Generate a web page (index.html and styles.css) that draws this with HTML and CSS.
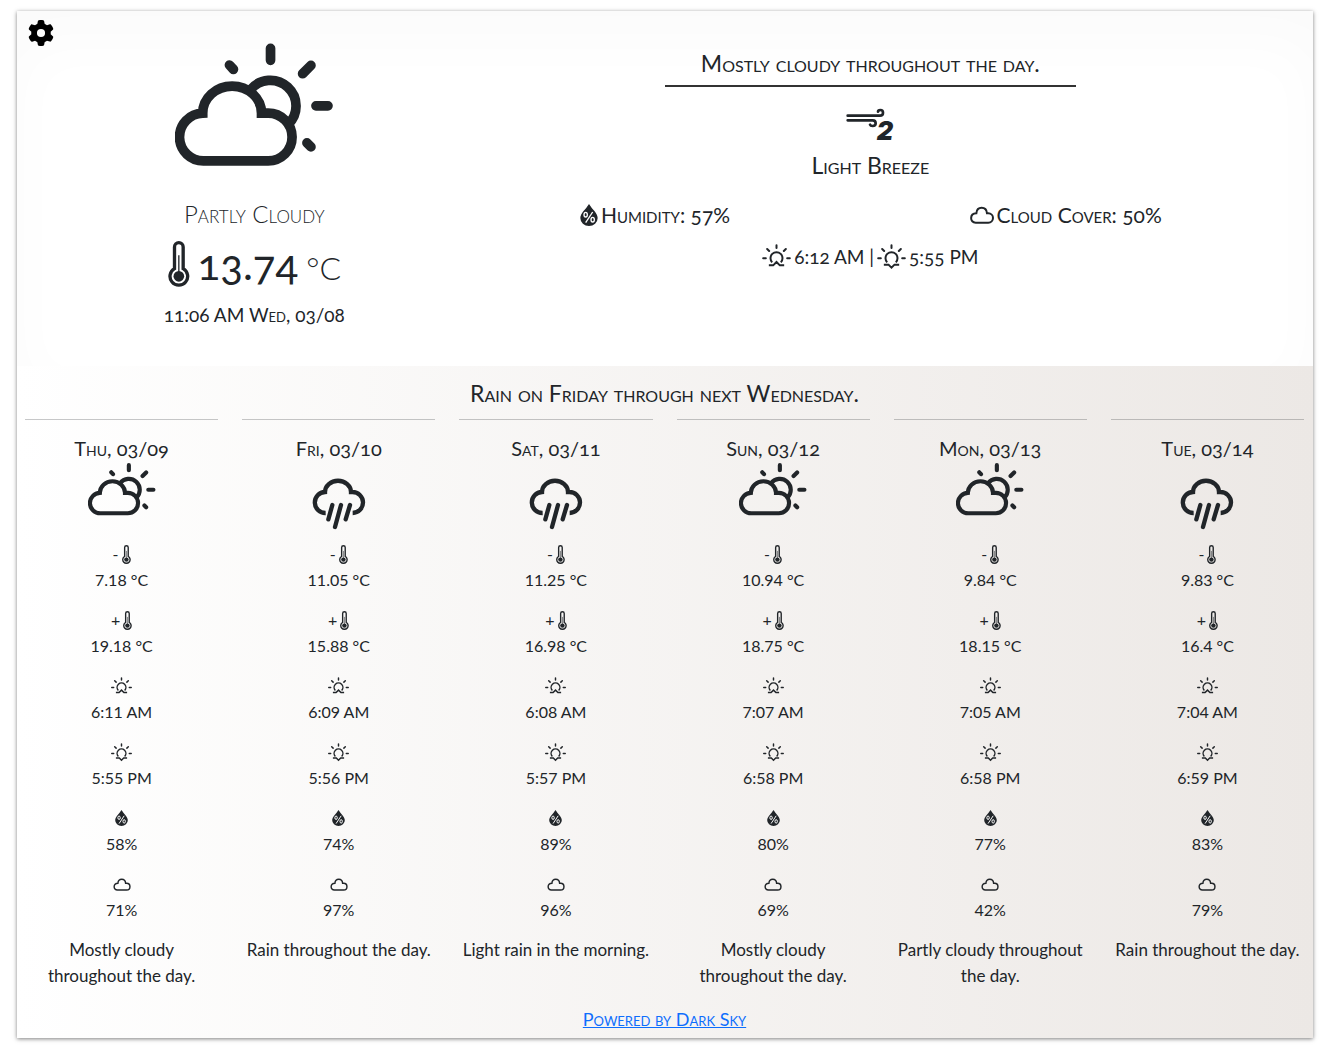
FILE: index.html
```html
<!DOCTYPE html>
<html lang="en">
<head>
<meta charset="utf-8">
<meta name="viewport" content="width=device-width, initial-scale=1">
<title>Weather</title>
<link rel="stylesheet" href="styles.css">
</head>
<body>
<svg class="sprite" aria-hidden="true">
  <symbol id="partly" viewBox="525 124 476 476">
    <g fill="none" stroke="currentColor" stroke-width="29">
      <path d="M608 340A71 71 0 0 0 612 483H804A71 71 0 0 0 804 340H784A87 80 0 0 0 608 340Z"/>
      <path d="M750 271A77 77 0 1 1 863 375"/>
      <path stroke-linecap="round" d="M811 146V182M947 318H983M907 222L932 197M688 196L700 209M920 429L932 441"/>
    </g>
  </symbol>
  <symbol id="rain" viewBox="883 276 204 204">
    <g fill="none" stroke="currentColor" stroke-width="13">
      <path d="M945 429A31 31 0 0 1 943 366A38 33 0 0 1 1021 366H1025A31 31 0 0 1 1026 429"/>
      <path stroke-linecap="round" d="M965 405L953 448M991 405L973 471M1018 405L1005 448"/>
    </g>
  </symbol>
  <symbol id="thermo" viewBox="91 155 65 138">
    <path fill="none" stroke="currentColor" stroke-width="10" d="M110 173a13 13 0 0 1 26 0V238A26.500 26.500 0 1 1 110 238Z"/>
    <circle cx="123" cy="261" r="16" fill="currentColor"/>
    <path fill="none" stroke="currentColor" stroke-width="4" d="M123 198V250"/>
  </symbol>
  <symbol id="drop" viewBox="53 42 52 66">
    <path fill="currentColor" d="M79 42C88 57 105 70 105 84A26 24 0 0 1 53 84C53 70 70 57 79 42Z"/>
    <g fill="none" stroke="#fff" stroke-width="4"><ellipse cx="69" cy="74" rx="5" ry="7"/><ellipse cx="90" cy="89" rx="5" ry="7"/><path d="M90 66L69 98"/></g>
  </symbol>
  <symbol id="cloud" viewBox="297 46 72 54">
    <path fill="none" stroke="currentColor" stroke-width="6" d="M314 96H352A14 14 0 0 0 352 68H348C346 46 318 46 316 68C295 69 296 96 314 96Z"/>
  </symbol>
  <symbol id="sunrise" viewBox="611 159 86 78">
    <g fill="none" stroke="currentColor" stroke-width="6"><path d="M641 214A18 18 0 1 1 667 214M631 223H644L654 213L664 223H677"/><path stroke-linecap="round" d="M654 163V171M626 174L632 180M682 174L676 180M614 202H622M686 202H694"/></g>
  </symbol>
  <symbol id="sunset" viewBox="611 159 86 78">
    <g fill="none" stroke="currentColor" stroke-width="6"><path d="M641 214A18 18 0 1 1 667 214M631 221H645L654 230L663 221H677"/><path stroke-linecap="round" d="M654 163V171M626 174L632 180M682 174L676 180M614 202H622M686 202H694"/></g>
  </symbol>
</svg>

<main class="card">
  <section class="current">
    <button class="settings" type="button" aria-label="Settings">
      <svg viewBox="0 0 512 512"><path d="M495.900 166.600c3.200 8.700.5 18.400-6.400 24.600l-43.300 39.400c1.100 8.300 1.700 16.800 1.700 25.400s-.6 17.100-1.700 25.400l43.300 39.400c6.900 6.200 9.600 15.900 6.400 24.600c-4.400 11.900-9.700 23.300-15.800 34.300l-4.700 8.100c-6.600 11-14 21.400-22.100 31.200c-5.900 7.200-15.700 9.600-24.500 6.800l-55.700-17.700c-13.400 10.300-28.200 18.900-44 25.400l-12.500 57.100c-2 9.100-9 16.300-18.200 17.800c-13.800 2.300-28 3.500-42.500 3.500s-28.700-1.200-42.500-3.500c-9.200-1.500-16.200-8.700-18.200-17.800l-12.500-57.100c-15.800-6.500-30.600-15.100-44-25.400L83.100 425.900c-8.800 2.800-18.600.3-24.500-6.800c-8.100-9.800-15.500-20.200-22.100-31.200l-4.700-8.100c-6.100-11-11.400-22.400-15.800-34.300c-3.200-8.700-.5-18.400 6.400-24.600l43.300-39.400C64.600 273.100 64 264.600 64 256s.6-17.100 1.700-25.400L22.400 191.200c-6.900-6.200-9.600-15.900-6.400-24.600c4.400-11.900 9.700-23.300 15.800-34.300l4.700-8.100c6.600-11 14-21.400 22.100-31.200c5.900-7.200 15.700-9.600 24.500-6.800l55.700 17.700c13.400-10.300 28.200-18.900 44-25.400l12.500-57.100c2-9.100 9-16.300 18.200-17.800C227.300 1.200 241.500 0 256 0s28.700 1.200 42.500 3.500c9.200 1.500 16.200 8.700 18.200 17.800l12.500 57.100c15.800 6.500 30.600 15.100 44 25.400l55.700-17.700c8.800-2.800 18.600-.3 24.500 6.800c8.100 9.800 15.500 20.200 22.100 31.200l4.700 8.100c6.100 11 11.400 22.400 15.800 34.300zM256 336a80 80 0 1 0 0-160 80 80 0 1 0 0 160z"/></svg>
    </button>
    <div class="now">
      <svg class="now-icon"><use href="#partly"/></svg>
      <p class="condition">Partly Cloudy</p>
      <p class="temperature"><svg class="thermo-lg"><use href="#thermo"/></svg><span>13.74</span> <span class="unit">°C</span></p>
      <p class="label label-time">11:06 AM Wed, 03/08</p>
    </div>
    <div class="details">
      <p class="summary">Mostly cloudy throughout the day.</p>
      <svg class="breeze" viewBox="0 0 147 99">
        <path fill="none" stroke="currentColor" stroke-width="8" stroke-linecap="round" d="M5 23H102c7 0 9-5 9-9 0-5-4-8-8-8s-7 2-7 5M5 37H80c6 0 9 4 9 9s-4 8-9 8c-4 0-7-1-8-4"/>
        <text class="force" x="92" y="97">2</text>
      </svg>
      <p class="label">Light Breeze</p>
      <div class="pair">
        <p class="label label-stat"><svg class="drop-lg"><use href="#drop"/></svg>Humidity: 57%</p>
        <p class="label label-stat"><svg class="cloud-lg"><use href="#cloud"/></svg>Cloud Cover: 50%</p>
      </div>
      <p class="label label-time"><svg class="sun-lg"><use href="#sunrise"/></svg>6:12 AM |<svg class="sun-lg"><use href="#sunset"/></svg>5:55 PM</p>
    </div>
  </section>

  <section class="forecast">
    <h2 class="label">Rain on Friday through next Wednesday.</h2>
    <div class="days">
      <article class="day">
        <h3 class="label label-day">Thu, 03/09</h3>
        <svg class="day-icon"><use href="#partly"/></svg>
        <p class="metric"><span>-<svg class="thermo"><use href="#thermo"/></svg></span>7.18 °C</p>
        <p class="metric"><span>+<svg class="thermo"><use href="#thermo"/></svg></span>19.18 °C</p>
        <p class="metric"><span><svg class="sun"><use href="#sunrise"/></svg></span>6:11 AM</p>
        <p class="metric"><span><svg class="sun"><use href="#sunset"/></svg></span>5:55 PM</p>
        <p class="metric"><span><svg class="drop"><use href="#drop"/></svg></span>58%</p>
        <p class="metric"><span><svg class="cloud"><use href="#cloud"/></svg></span>71%</p>
        <p class="outlook">Mostly cloudy throughout the day.</p>
      </article>
      <article class="day">
        <h3 class="label label-day">Fri, 03/10</h3>
        <svg class="day-icon"><use href="#rain"/></svg>
        <p class="metric"><span>-<svg class="thermo"><use href="#thermo"/></svg></span>11.05 °C</p>
        <p class="metric"><span>+<svg class="thermo"><use href="#thermo"/></svg></span>15.88 °C</p>
        <p class="metric"><span><svg class="sun"><use href="#sunrise"/></svg></span>6:09 AM</p>
        <p class="metric"><span><svg class="sun"><use href="#sunset"/></svg></span>5:56 PM</p>
        <p class="metric"><span><svg class="drop"><use href="#drop"/></svg></span>74%</p>
        <p class="metric"><span><svg class="cloud"><use href="#cloud"/></svg></span>97%</p>
        <p class="outlook">Rain throughout the day.</p>
      </article>
      <article class="day">
        <h3 class="label label-day">Sat, 03/11</h3>
        <svg class="day-icon"><use href="#rain"/></svg>
        <p class="metric"><span>-<svg class="thermo"><use href="#thermo"/></svg></span>11.25 °C</p>
        <p class="metric"><span>+<svg class="thermo"><use href="#thermo"/></svg></span>16.98 °C</p>
        <p class="metric"><span><svg class="sun"><use href="#sunrise"/></svg></span>6:08 AM</p>
        <p class="metric"><span><svg class="sun"><use href="#sunset"/></svg></span>5:57 PM</p>
        <p class="metric"><span><svg class="drop"><use href="#drop"/></svg></span>89%</p>
        <p class="metric"><span><svg class="cloud"><use href="#cloud"/></svg></span>96%</p>
        <p class="outlook">Light rain in the morning.</p>
      </article>
      <article class="day">
        <h3 class="label label-day">Sun, 03/12</h3>
        <svg class="day-icon"><use href="#partly"/></svg>
        <p class="metric"><span>-<svg class="thermo"><use href="#thermo"/></svg></span>10.94 °C</p>
        <p class="metric"><span>+<svg class="thermo"><use href="#thermo"/></svg></span>18.75 °C</p>
        <p class="metric"><span><svg class="sun"><use href="#sunrise"/></svg></span>7:07 AM</p>
        <p class="metric"><span><svg class="sun"><use href="#sunset"/></svg></span>6:58 PM</p>
        <p class="metric"><span><svg class="drop"><use href="#drop"/></svg></span>80%</p>
        <p class="metric"><span><svg class="cloud"><use href="#cloud"/></svg></span>69%</p>
        <p class="outlook">Mostly cloudy throughout the day.</p>
      </article>
      <article class="day">
        <h3 class="label label-day">Mon, 03/13</h3>
        <svg class="day-icon"><use href="#partly"/></svg>
        <p class="metric"><span>-<svg class="thermo"><use href="#thermo"/></svg></span>9.84 °C</p>
        <p class="metric"><span>+<svg class="thermo"><use href="#thermo"/></svg></span>18.15 °C</p>
        <p class="metric"><span><svg class="sun"><use href="#sunrise"/></svg></span>7:05 AM</p>
        <p class="metric"><span><svg class="sun"><use href="#sunset"/></svg></span>6:58 PM</p>
        <p class="metric"><span><svg class="drop"><use href="#drop"/></svg></span>77%</p>
        <p class="metric"><span><svg class="cloud"><use href="#cloud"/></svg></span>42%</p>
        <p class="outlook">Partly cloudy throughout the day.</p>
      </article>
      <article class="day">
        <h3 class="label label-day">Tue, 03/14</h3>
        <svg class="day-icon"><use href="#rain"/></svg>
        <p class="metric"><span>-<svg class="thermo"><use href="#thermo"/></svg></span>9.83 °C</p>
        <p class="metric"><span>+<svg class="thermo"><use href="#thermo"/></svg></span>16.4 °C</p>
        <p class="metric"><span><svg class="sun"><use href="#sunrise"/></svg></span>7:04 AM</p>
        <p class="metric"><span><svg class="sun"><use href="#sunset"/></svg></span>6:59 PM</p>
        <p class="metric"><span><svg class="drop"><use href="#drop"/></svg></span>83%</p>
        <p class="metric"><span><svg class="cloud"><use href="#cloud"/></svg></span>79%</p>
        <p class="outlook">Rain throughout the day.</p>
      </article>
    </div>
    <a class="credit" href="#">Powered by Dark Sky</a>
  </section>
</main>
</body>
</html>
```
FILE: styles.css
```css
* { box-sizing: border-box; }

body {
  margin: 0;
  padding: 11px 13px 18px 17px;
  background: #fff;
  color: #212529;
  font-family: Lato, "Open Sans", sans-serif;
  font-size: 16px;
  line-height: 26px;
}

h2, h3, p { margin: 0; }

svg { display: block; flex: none; }

.sprite { position: absolute; width: 0; height: 0; }

.card { box-shadow: 0 1px 4px rgba(0, 0, 0, 0.5); }

.label, .summary, .condition, .temperature, .credit {
  font-variant-caps: small-caps;
  font-variant-numeric: oldstyle-nums;
}

.label {
  display: flex;
  align-items: center;
  justify-content: center;
  gap: 3px;
  font-size: 23px;
  font-weight: 400;
  line-height: 30px;
}

.label-stat { padding-right: 20px; font-size: 21px; }
.label-day { font-size: 20px; }
.label-time { font-size: 19px; }

.current {
  position: relative;
  display: grid;
  grid-template-columns: 1fr 2fr;
  padding: 30px 32px 36px;
  background: #fff;
  box-shadow: inset 0 30px 60px rgba(0, 0, 0, 0.02);
  text-align: center;
}

.settings {
  position: absolute;
  top: 9px;
  left: 11px;
  padding: 0;
  border: 0;
  background: none;
}

.settings svg { width: 26px; height: 26px; }

.now, .details {
  display: flex;
  flex-direction: column;
  align-items: center;
}

.now-icon { width: 159px; height: 159px; }

.condition {
  font-size: 24px;
  font-weight: 300;
  line-height: 28px;
}

.temperature {
  display: flex;
  align-items: baseline;
  gap: 8px;
  padding: 9px 0;
  font-size: 42px;
  line-height: 54px;
}

.unit { font-size: 32px; font-weight: 300; line-height: 40px; }

.thermo-lg { width: 22px; height: 46px; align-self: center; }

.summary {
  width: 50%;
  margin: 7px 0 21px;
  border-bottom: 2px solid #333;
  padding-bottom: 7px;
  font-size: 23px;
  line-height: 30px;
}

.breeze { width: 49px; height: 33px; margin-bottom: 9px; overflow: visible; }

.force { font: italic 900 76px Inter, sans-serif; fill: currentColor; }

.pair {
  display: grid;
  grid-template-columns: 1fr 1fr;
  width: 100%;
  margin: 20px 0 12px;
}

.drop-lg { width: 18px; height: 22px; }
.cloud-lg { width: 24px; height: 18px; }
.sun-lg { width: 29px; height: 26px; }

.forecast {
  padding: 12px 9px 5px 8px;
  background: linear-gradient(to right, #fff, #ece8e5);
  text-align: center;
}

.days {
  display: grid;
  grid-template-columns: repeat(6, 1fr);
  gap: 24px;
  margin: 11px 0 17px;
}

.day {
  display: flex;
  flex-direction: column;
  align-items: center;
  border-top: 1px solid rgba(33, 37, 41, 0.25);
  padding-top: 13px;
}

.day-icon { width: 68px; height: 68px; margin: -1px 0 11px; }

.metric { margin-bottom: 14px; }

.metric span {
  display: flex;
  align-items: center;
  justify-content: center;
  gap: 3px;
  height: 26px;
}

.thermo { width: 9px; height: 19px; }
.sun { width: 21px; height: 19px; }
.drop { width: 13px; height: 16px; }
.cloud { width: 18px; height: 13px; }

.outlook { padding: 0 2px; font-size: 17px; }

.credit { color: #0d6efd; font-size: 18px; }
```
